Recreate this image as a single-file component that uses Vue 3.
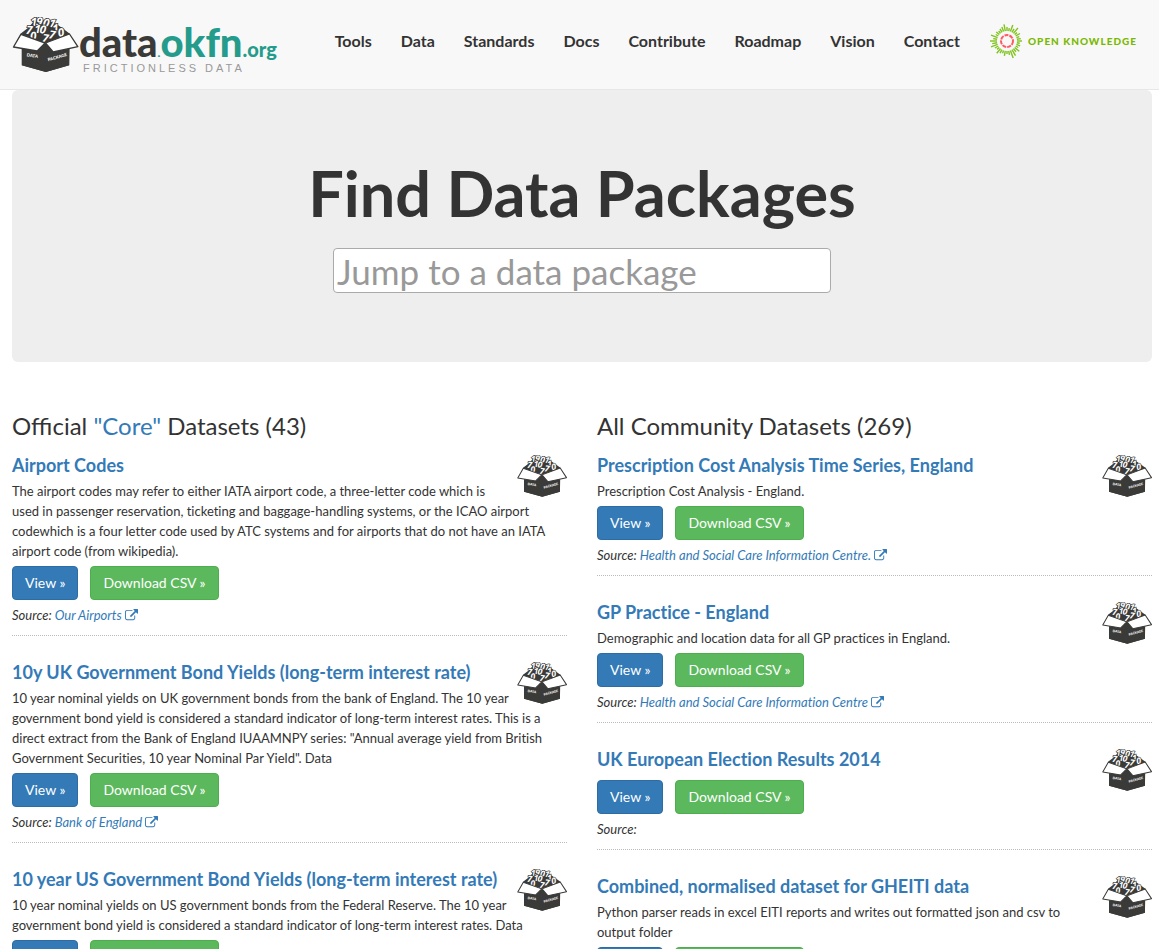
<template>
  <!-- Shared box drawing, used by the logo and by every dataset -->
  <svg class="symbols" aria-hidden="true">
    <symbol id="package-box" viewBox="14 20 198 165">
      <path fill="#3a3a38" d="M38 70 L64 50 L80 30 L130 30 L164 54 L186 70 L184 165 L114 185 L42 165 L42 110 Z" />
      <text
        v-for="(d, i) in digits"
        :key="i"
        :transform="`translate(${d.x} ${d.y}) rotate(${d.r})`"
        class="digit"
      >{{ d.n }}</text>
      <path fill="#3a3a38" d="M88 90 L113 98 L138 90 L184 100 L184 165 L114 185 L42 165 L42 100 Z" />
      <path class="flap" d="M39 72 L112 98 L88 122 L17 110 Z" />
      <path class="flap" d="M185 71 L210 109 L136 125 L113 98 Z" />
      <text class="box-word" transform="translate(56 138) rotate(9)">DATA</text>
      <text class="box-word" transform="translate(121 153) rotate(-16)">PACKAGE</text>
    </symbol>
  </svg>

  <header class="navbar">
    <a href="#" class="brand">
      <svg class="brand-box" aria-hidden="true"><use href="#package-box" /></svg>
      <span class="brand-text">
        <span class="brand-name">data<span class="brand-okfn"><small class="brand-dot">.</small>okfn<small>.org</small></span></span>
        <span class="brand-tagline">FRICTIONLESS DATA</span>
      </span>
    </a>
    <nav class="menu">
      <a v-for="link in links" :key="link" href="#">{{ link }}</a>
      <a href="#" class="ok-logo">
        <svg viewBox="-18 -18 36 36" aria-hidden="true">
          <circle class="ok-ring" r="6" />
          <line
            v-for="(length, i) in rays"
            :key="i"
            class="ok-ray"
            x1="0"
            y1="-10"
            x2="0"
            :y2="-10 - length"
            :transform="`rotate(${i * 10})`"
          />
        </svg>
        <span>OPEN KNOWLEDGE</span>
      </a>
    </nav>
  </header>

  <main class="container">
    <section class="jumbotron">
      <h1>Find Data Packages</h1>
      <input v-model="query" type="text" placeholder="Jump to a data package" aria-label="Jump to a data package" />
    </section>

    <div class="columns">
      <section v-for="column in columns" :key="column.id">
        <h2 v-if="column.id === 'core'">Official <a href="#">"Core"</a> Datasets (43)</h2>
        <h2 v-else>All Community Datasets (269)</h2>
        <article v-for="item in column.items" :key="item.title" class="dataset">
          <svg class="dataset-icon" aria-hidden="true"><use href="#package-box" /></svg>
          <h3><a href="#">{{ item.title }}</a></h3>
          <p v-if="item.description">{{ item.description }}</p>
          <div class="actions">
            <button type="button" class="btn btn-primary">View »</button>
            <button type="button" class="btn btn-success">Download CSV »</button>
          </div>
          <div class="source">
            Source:
            <a v-if="item.source" href="#">{{ item.source }}
              <svg class="external" viewBox="0 0 1792 1792" aria-hidden="true">
                <path d="M1408 928v320q0 119-84.500 203.500t-203.500 84.500h-832q-119 0-203.500-84.500t-84.500-203.500v-832q0-119 84.500-203.500t203.500-84.500h704q14 0 23 9t9 23v64q0 14-9 23t-23 9h-704q-66 0-113 47t-47 113v832q0 66 47 113t113 47h832q66 0 113-47t47-113v-320q0-14 9-23t23-9h64q14 0 23 9t9 23zm384-864v512q0 26-19 45t-45 19-45-19l-176-176-652 652q-10 10-23 10t-23-10l-114-114q-10-10-10-23t10-23l652-652-176-176q-19-19-19-45t19-45 45-19h512q26 0 45 19t19 45z" />
              </svg>
            </a>
          </div>
        </article>
      </section>
    </div>
  </main>
</template>

<script setup>
import { ref } from 'vue'

const query = ref('')

const links = ['Tools', 'Data', 'Standards', 'Docs', 'Contribute', 'Roadmap', 'Vision', 'Contact']

// Digits flying out of the box
const digits = [
  { n: 1, x: 70, y: 48, r: -5 },
  { n: 9, x: 84, y: 44, r: 8 },
  { n: 0, x: 104, y: 48, r: 10 },
  { n: 1, x: 121, y: 48, r: 15 },
  { n: 7, x: 54, y: 70, r: 5 },
  { n: 1, x: 80, y: 68, r: 0 },
  { n: 0, x: 94, y: 68, r: 8 },
  { n: 1, x: 136, y: 68, r: -10 },
  { n: 0, x: 68, y: 90, r: -5 },
  { n: 7, x: 102, y: 94, r: 8 },
  { n: 7, x: 122, y: 84, r: 8 },
  { n: 0, x: 153, y: 80, r: -12 }
]

// Length of each ray, clockwise from the top
const rays = [4, 3, 7, 4, 7, 3, 5, 3, 4, 5, 3, 4, 3, 6, 4, 7, 8, 4, 3, 5, 3, 4, 6, 3, 4, 7, 5, 7, 4, 7, 3, 4, 3, 4, 5, 7]

const columns = [
  {
    id: 'core',
    items: [
      {
        title: 'Airport Codes',
        description: 'The airport codes may refer to either IATA airport code, a three-letter code which is used in passenger reservation, ticketing and baggage-handling systems, or the ICAO airport codewhich is a four letter code used by ATC systems and for airports that do not have an IATA airport code (from wikipedia).',
        source: 'Our Airports'
      },
      {
        title: '10y UK Government Bond Yields (long-term interest rate)',
        description: '10 year nominal yields on UK government bonds from the bank of England. The 10 year government bond yield is considered a standard indicator of long-term interest rates. This is a direct extract from the Bank of England IUAAMNPY series: "Annual average yield from British Government Securities, 10 year Nominal Par Yield". Data',
        source: 'Bank of England'
      },
      {
        title: '10 year US Government Bond Yields (long-term interest rate)',
        description: '10 year nominal yields on US government bonds from the Federal Reserve. The 10 year government bond yield is considered a standard indicator of long-term interest rates. Data',
        source: ''
      }
    ]
  },
  {
    id: 'community',
    items: [
      {
        title: 'Prescription Cost Analysis Time Series, England',
        description: 'Prescription Cost Analysis - England.',
        source: 'Health and Social Care Information Centre.'
      },
      {
        title: 'GP Practice - England',
        description: 'Demographic and location data for all GP practices in England.',
        source: 'Health and Social Care Information Centre'
      },
      {
        title: 'UK European Election Results 2014',
        description: '',
        source: ''
      },
      {
        title: 'Combined, normalised dataset for GHEITI data',
        description: 'Python parser reads in excel EITI reports and writes out formatted json and csv to output folder',
        source: ''
      }
    ]
  }
]
</script>

<style>
body {
  margin: 0;
  background: #fff;
  color: #333;
  font-family: Lato, "Liberation Sans", sans-serif;
  font-size: 13px;
  line-height: 20px;
}
</style>

<style scoped>
a {
  color: #337ab7;
  text-decoration: none;
}

.symbols {
  display: none;
}

.digit {
  font: italic bold 34px "Open Sans", sans-serif;
  fill: #fff;
  stroke: #3a3a38;
  stroke-width: 5px;
  paint-order: stroke;
}

.flap {
  fill: #fff;
  stroke: #3a3a38;
  stroke-width: 4px;
  stroke-linejoin: round;
}

.box-word {
  font: 900 13px Lato, sans-serif;
  fill: #fff;
}

.navbar {
  display: flex;
  justify-content: space-between;
  box-sizing: border-box;
  height: 90px;
  padding: 0 22px 0 12px;
  background: #f8f8f8;
  border-bottom: 1px solid #e7e7e7;
}

.brand {
  display: flex;
  align-items: flex-start;
  padding-top: 17px;
}

.brand-box {
  width: 67px;
  height: 55px;
}

.brand-text {
  display: flex;
  flex-direction: column;
  padding-top: 6px;
}

.brand-name {
  color: #3a3a38;
  font: 900 40px/38px Lato, sans-serif;
}

.brand-okfn {
  color: #259b8c;
}

.brand-name small {
  font-size: 20px;
  line-height: 20px;
}

.brand-name .brand-dot {
  font-size: 12px;
}

.brand-tagline {
  padding-left: 4px;
  color: #999;
  font: 11px/11px "Liberation Sans", sans-serif;
  letter-spacing: 3px;
}

.menu {
  display: flex;
  align-items: center;
  gap: 29px;
  height: 82px;
}

.menu a {
  color: #333;
  font-size: 16px;
  font-weight: bold;
}

.menu .ok-logo {
  display: flex;
  align-items: center;
  gap: 3px;
  color: #7ab800;
  font-size: 10px;
  font-weight: 900;
  letter-spacing: 1px;
}

.ok-logo svg {
  width: 36px;
  height: 36px;
}

.ok-ring {
  fill: none;
  stroke: #ff5a5f;
  stroke-width: 2px;
  stroke-dasharray: 4 1;
}

.ok-ray {
  stroke: #7fc31c;
  stroke-width: 1.4px;
}

.container {
  padding: 0 7px 0 12px;
}

.jumbotron {
  display: flex;
  flex-direction: column;
  align-items: center;
  padding: 68px 60px 69px;
  background: #eee;
  border-radius: 6px;
}

.jumbotron h1 {
  margin: 0 0 21px;
  font-size: 63px;
  line-height: 69px;
}

.jumbotron input {
  box-sizing: border-box;
  width: 498px;
  max-width: 100%;
  height: 45px;
  padding: 0 3px;
  border: 1px solid #aaa;
  border-radius: 4px;
  background: #fff;
  color: #333;
  font: 35px Lato, sans-serif;
}

.jumbotron input::placeholder {
  color: #999;
}

.columns {
  display: grid;
  grid-template-columns: 1fr 1fr;
  gap: 30px;
  padding-top: 50px;
}

h2 {
  margin: 0 0 16px;
  font-size: 24px;
  font-weight: normal;
  line-height: 27px;
}

.dataset {
  margin-bottom: 26px;
  padding-bottom: 10px;
  border-bottom: 1px dotted #bbb;
  font-variant-ligatures: none;
}

.dataset-icon {
  float: right;
  width: 50px;
  height: 42px;
  margin-left: 5px;
}

h3 {
  margin: 0 0 6px;
  font-size: 18px;
  line-height: 20px;
}

p {
  margin: 0;
}

.actions {
  display: flex;
  gap: 12px;
  padding: 5px 0;
}

.btn {
  height: 34px;
  padding: 0 12px;
  border: 1px solid;
  border-radius: 4px;
  color: #fff;
  font: 14px/20px Lato, sans-serif;
}

.btn-primary {
  background: #337ab7;
  border-color: #2e6da4;
}

.btn-success {
  background: #5cb85c;
  border-color: #4cae4c;
}

.source {
  font-style: italic;
}

.external {
  width: 13px;
  height: 13px;
  fill: currentColor;
  vertical-align: -2px;
}
</style>
